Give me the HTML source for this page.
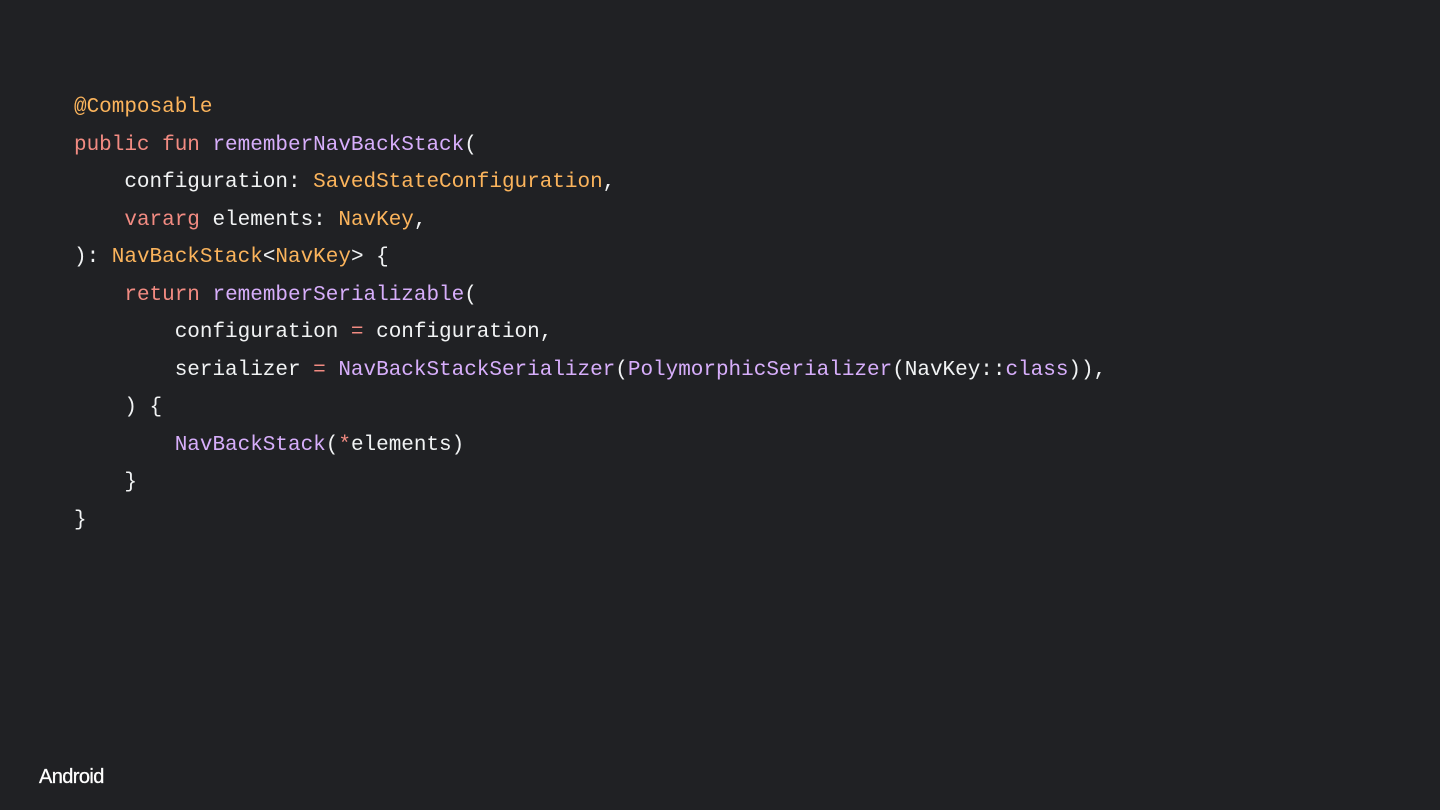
<!DOCTYPE html>
<html>
<head>
<meta charset="utf-8">
<style>
html,body{margin:0;padding:0;background:#202124;width:1440px;height:810px;overflow:hidden}
#c{position:absolute;left:74px;top:89px;margin:0;font:21px/37.5px "Liberation Mono",monospace;letter-spacing:-0.015px;color:#f1f3f4;white-space:pre}
.o{color:#fbb45c}.k{color:#f28b82}.p{color:#d7aefb}
#a{position:absolute;left:39px;top:764px;font:20px/26px "Liberation Sans",sans-serif;letter-spacing:-0.6px;color:#fff;-webkit-text-stroke:0.3px #fff}
</style>
</head>
<body>
<pre id="c"><span class="o">@Composable</span>
<span class="k">public fun</span> <span class="p">rememberNavBackStack</span>(
    configuration: <span class="o">SavedStateConfiguration</span>,
    <span class="k">vararg</span> elements: <span class="o">NavKey</span>,
): <span class="o">NavBackStack</span>&lt;<span class="o">NavKey</span>&gt; {
    <span class="k">return</span> <span class="p">rememberSerializable</span>(
        configuration <span class="k">=</span> configuration,
        serializer <span class="k">=</span> <span class="p">NavBackStackSerializer</span>(<span class="p">PolymorphicSerializer</span>(NavKey::<span class="p">class</span>)),
    ) {
        <span class="p">NavBackStack</span>(<span class="k">*</span>elements)
    }
}</pre>
<div id="a">Android</div>
</body>
</html>
